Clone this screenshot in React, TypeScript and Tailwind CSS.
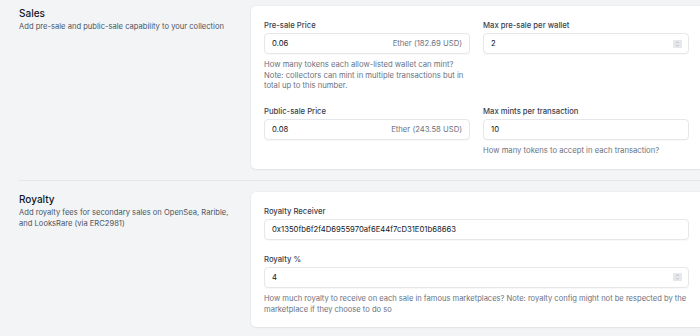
import React from 'react';

function Spinner() {
  return (
    <svg width="9" height="8" viewBox="0 0 9 8" className="shrink-0">
      <rect x="0" y="0" width="9" height="8" rx="1" fill="#e5e7eb" />
      <path d="M3.3 3 L4.5 1.8 L5.7 3" fill="none" stroke="#9ca3af" strokeWidth="0.6" />
      <path d="M3.3 5 L4.5 6.2 L5.7 5" fill="none" stroke="#9ca3af" strokeWidth="0.6" />
    </svg>
  );
}

interface FieldProps {
  label: string;
  value: string;
  addon?: string;
  number?: boolean;
  help?: React.ReactNode;
}

function Field({ label, value, addon, number, help }: FieldProps) {
  return (
    <div className="min-w-0">
      <label className="block text-[7.7px] leading-[11px] font-medium text-[#374151]">{label}</label>
      <div className="mt-[2px] flex items-center h-[21px] rounded-[4px] border border-[#e5e7eb] bg-white pl-[7px] pr-[6px] shadow-[0_1px_1px_rgba(0,0,0,0.03)]">
        <input
          readOnly
          value={value}
          className="flex-1 min-w-0 bg-transparent outline-none text-[7.7px] text-[#111827]"
        />
        {addon && <span className="text-[7.7px] text-[#6b7280] pr-[1px]">{addon}</span>}
        {number && <Spinner />}
      </div>
      {help && <p className="mt-[6px] text-[7.7px] leading-[10.7px] text-[#6b7280]">{help}</p>}
    </div>
  );
}

function SectionIntro({ title, children }: { title: string; children: React.ReactNode }) {
  return (
    <div className="w-[219px] mr-[13px] pt-[1px] shrink-0">
      <h3 className="text-[10px] leading-[13.4px] font-medium text-[#111827]">{title}</h3>
      <p className="mt-[2px] text-[7.6px] leading-[10.7px] text-[#4b5563]">{children}</p>
    </div>
  );
}

const card =
  'flex-1 min-w-0 bg-white rounded-l-[5px] pl-[13px] pr-[11px] pt-[14px] pb-[12px] shadow-[0_0_0_1px_rgba(0,0,0,0.025),0_1px_2px_rgba(0,0,0,0.05)]';

export default function App() {
  return (
    <div className="w-[700px] h-[336px] overflow-hidden bg-[#f3f4f6] font-['Inter',sans-serif]">
      {/* Sales */}
      <section className="flex pt-[6px] pl-[19px]">
        <SectionIntro title="Sales">Add pre-sale and public-sale capability to your collection</SectionIntro>
        <div className={card}>
          <div className="grid grid-cols-2 gap-x-[13px] gap-y-[14px]">
            <Field
              label="Pre-sale Price"
              value="0.06"
              addon="Ether (182.69 USD)"
              help="How many tokens each allow-listed wallet can mint? Note: collectors can mint in multiple transactions but in total up to this number."
            />
            <Field label="Max pre-sale per wallet" value="2" number />
            <Field label="Public-sale Price" value="0.08" addon="Ether (243.58 USD)" />
            <Field label="Max mints per transaction" value="10" help="How many tokens to accept in each transaction?" />
          </div>
        </div>
      </section>

      <div className="py-[11px] pl-[19px]">
        <div className="h-px bg-[#e5e7eb]" />
      </div>

      {/* Royalty */}
      <section className="flex pl-[19px]">
        <SectionIntro title="Royalty">Add royalty fees for secondary sales on OpenSea, Rarible, and LooksRare (via ERC2981)</SectionIntro>
        <div className={card}>
          <div className="flex flex-col gap-[14px]">
            <Field label="Royalty Receiver" value="0x1350fb6f2f4D6955970af6E44f7cD31E01b68663" />
            <Field
              label="Royalty %"
              value="4"
              number
              help={
                <span className="block text-[7.6px] tracking-[-0.02px]">
                  <span className="block whitespace-nowrap">
                    How much royalty to receive on each sale in famous marketplaces? Note: royalty config might not be respected by the
                  </span>
                  <span className="block whitespace-nowrap">marketplace if they choose to do so</span>
                </span>
              }
            />
          </div>
        </div>
      </section>
    </div>
  );
}
